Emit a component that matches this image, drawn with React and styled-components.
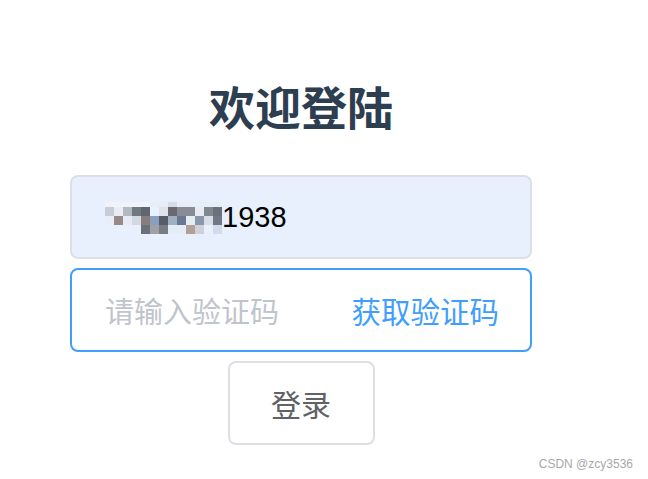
import React, { useState } from "react";
import styled, { createGlobalStyle } from "styled-components";

const GlobalStyle = createGlobalStyle`
    html, body {
        margin: 0;
        padding: 0;
        background: #fff;
    }
    body {
        font-family: "Liberation Sans", "Noto Sans CJK SC", sans-serif;
    }
`

const Page = styled.div`
    width: 602px;
    display: flex;
    flex-direction: column;
    align-items: center;
    padding-top: 73px;
    height: 479px;
    box-sizing: border-box;
`
const Titulo = styled.h1`
    margin: 0 0 38px;
    font-family: "Noto Sans CJK SC", sans-serif;
    font-size: 46px;
    line-height: 64px;
    font-weight: 700;
    color: #2c3e50;
`
const Campo = styled.div`
    width: 462px;
    height: 84px;
    box-sizing: border-box;
    border: 2px solid ${(props) => (props.focado ? "#409eff" : "#dcdfe6")};
    border-radius: 8px;
    background: ${(props) => (props.preenchido ? "#e8f0fe" : "#fff")};
    display: flex;
    align-items: center;
    padding: 0 31px 0 33px;
    margin-bottom: 9px;
`
const Valor = styled.span`
    display: flex;
    align-items: center;
    font-size: 29px;
    color: #000;
`
const Entrada = styled.input`
    flex: 1;
    min-width: 0;
    border: none;
    outline: none;
    background: transparent;
    font-family: "Noto Sans CJK SC", sans-serif;
    font-size: 29px;
    padding: 0;
    color: #606266;
    caret-color: #303133;
    &::placeholder {
        color: #c0c4cc;
    }
`
const Codigo = styled.span`
    font-family: "Noto Sans CJK SC", sans-serif;
    font-size: 29.5px;
    color: #409eff;
    cursor: pointer;
`
const Botao = styled.button`
    width: 147px;
    height: 84px;
    box-sizing: border-box;
    border: 2px solid #dcdfe6;
    border-radius: 8px;
    background: #fff;
    font-family: "Noto Sans CJK SC", sans-serif;
    font-size: 30px;
    color: #606266;
    cursor: pointer;
`
const Marca = styled.div`
    position: absolute;
    right: 15px;
    bottom: 8px;
    font-family: "Liberation Sans", sans-serif;
    font-size: 12px;
    color: #a8a8a8;
`

// mosaico que esconde o inicio do numero
const cores = [
    ["#f0f4fa", "#f0f4fa", "#f0f4fa", "#f0f4fa", "#f0f4fa", "#e6eef8", "#e6eef8", "#d8dce4", "#e6eef8", "#e6eef8", "#e6eef8", "#e6eef8", "#e6eef8"],
    ["#c8ccd6", "#e8edf5", "#b4b8c0", "#707880", "#606670", "#e8f2fe", "#e0e4ea", "#6a6a6e", "#888c94", "#888c94", "#e8ecf2", "#808890", "#6c7078"],
    ["#e8eef8", "#988888", "#e8ecf2", "#d4d8e0", "#8a7c7c", "#88a0c0", "#585c68", "#a0b0c0", "#687890", "#e4ecf6", "#8898a8", "#d8dee8", "#707888"],
    ["#e8f0fe", "#e8f0fe", "#e8f0fe", "#e8f0fe", "#6c7078", "#a0a0a8", "#787c84", "#e4ecf8", "#e4ecf8", "#b0a098", "#d0d0d8", "#e8f0fe", "#d0dceb"],
]

const Mosaico = () => (
    <svg width="117" height="32" viewBox="0 0 117 32" style={{ marginTop: 2 }}>
        {cores.map((linha, i) =>
            linha.map((cor, j) => (
                <rect key={i + "-" + j} x={j * 9} y={i === 0 ? 0 : 5 + (i - 1) * 9} width="9" height={i === 0 ? 5 : 9} fill={cor} />
            ))
        )}
    </svg>
)

const App = () => {
    const [codigo, setCodigo] = useState("")

    return (
        <Page>
            <GlobalStyle />
            <Titulo>欢迎登陆</Titulo>
            <Campo preenchido>
                <Valor>
                    <Mosaico />
                    1938
                </Valor>
            </Campo>
            <Campo focado>
                <Entrada
                    autoFocus
                    placeholder="请输入验证码"
                    value={codigo}
                    onChange={(e) => setCodigo(e.target.value)}
                />
                <Codigo>获取验证码</Codigo>
            </Campo>
            <Botao>登录</Botao>
            <Marca>CSDN @zcy3536</Marca>
        </Page>
    )
}
export default App;
